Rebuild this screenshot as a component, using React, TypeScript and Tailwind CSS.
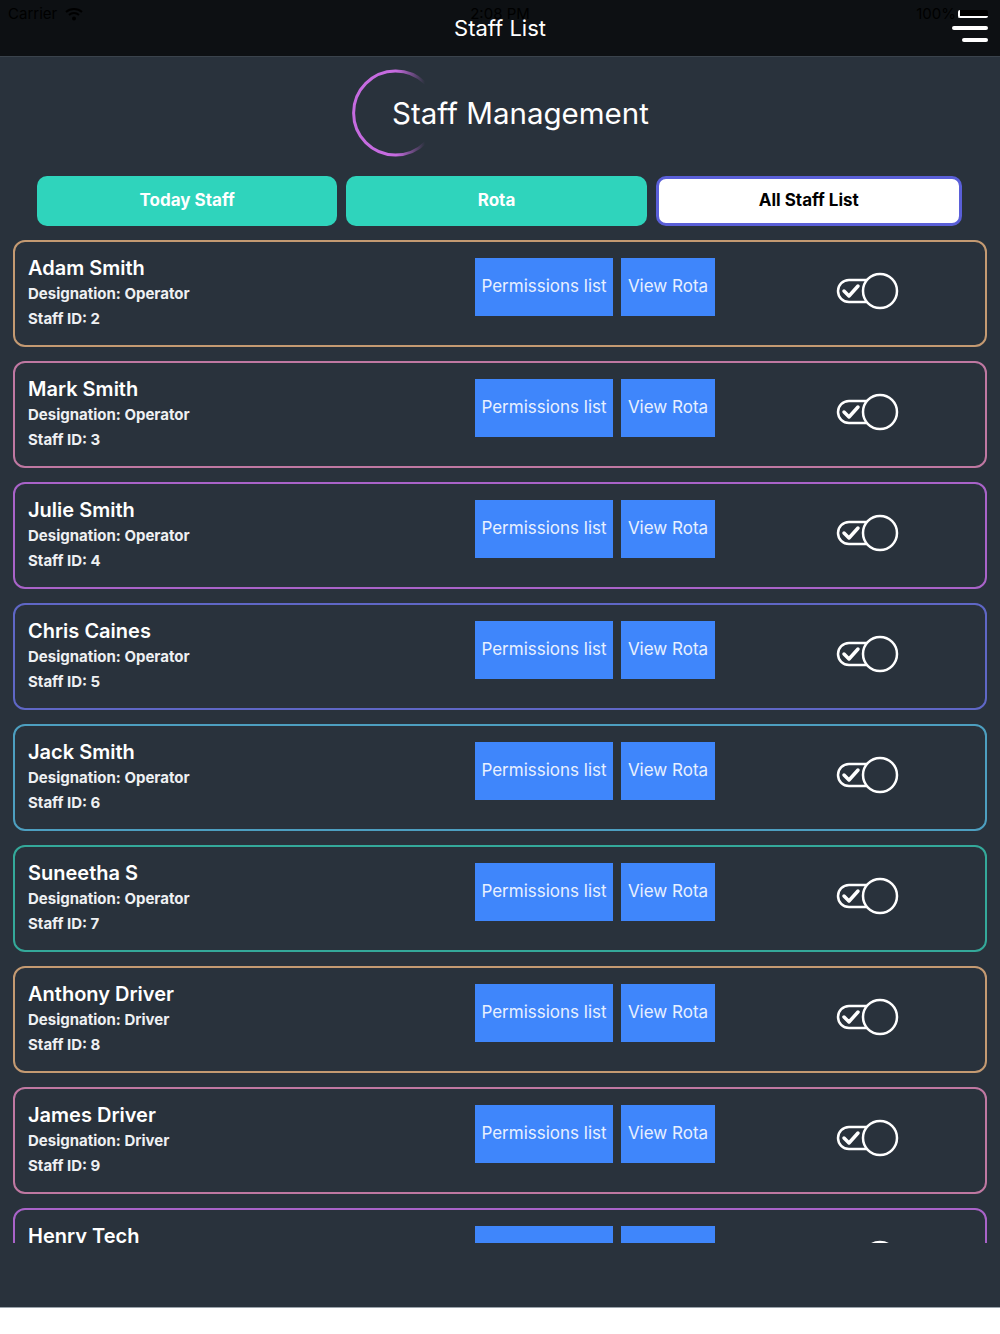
import { useState } from "react";

const staff = [
  { name: "Adam Smith", role: "Operator", id: 2 },
  { name: "Mark Smith", role: "Operator", id: 3 },
  { name: "Julie Smith", role: "Operator", id: 4 },
  { name: "Chris Caines", role: "Operator", id: 5 },
  { name: "Jack Smith", role: "Operator", id: 6 },
  { name: "Suneetha S", role: "Operator", id: 7 },
  { name: "Anthony Driver", role: "Driver", id: 8 },
  { name: "James Driver", role: "Driver", id: 9 },
  { name: "Henry Tech", role: "Technician", id: 10 },
];

const borders = [
  "border-[#c49a72]",
  "border-[#bf78a2]",
  "border-[#a963c9]",
  "border-[#5f67c6]",
  "border-[#4d9fc0]",
  "border-[#34a99a]",
];

function Toggle() {
  return (
    <svg width="66" height="42" viewBox="0 0 66 42" fill="none">
      <rect x="2" y="10" width="40" height="22" rx="11" stroke="white" strokeWidth="2.5" />
      <path d="M8 21l5 5 9-10" stroke="white" strokeWidth="3.5" strokeLinecap="round" strokeLinejoin="round" />
      <circle cx="44" cy="21" r="17" fill="#29323c" stroke="white" strokeWidth="2.5" />
    </svg>
  );
}

function StaffCard({ s, i }: { s: (typeof staff)[number]; i: number }) {
  return (
    <div className={`shrink-0 h-[107px] rounded-xl border-2 ${borders[i % 6]} flex items-start px-[13px]`}>
      <div className="w-[447px] pt-[13px]">
        <div className="text-[20px] leading-[26px] font-semibold text-white">{s.name}</div>
        <div className="mt-[1px] text-[15px] leading-[24px] font-bold text-[#eef0f2]">Designation: {s.role}</div>
        <div className="mt-[1px] text-[15px] leading-[24px] font-bold text-[#eef0f2]">Staff ID: {s.id}</div>
      </div>
      <div className="flex gap-2 pt-[16px]">
        <button className="h-[58px] w-[138px] bg-[#3f86fb] text-[17px] text-[#e8f0ff]">Permissions list</button>
        <button className="h-[58px] w-[94px] bg-[#3f86fb] text-[17px] text-[#e8f0ff]">View Rota</button>
      </div>
      <div className="ml-[121px] pt-[28px]">
        <Toggle />
      </div>
    </div>
  );
}

export default function App() {
  const [tab, setTab] = useState(2);
  const tabs = ["Today Staff", "Rota", "All Staff List"];
  return (
    <div className="w-[1000px] h-[1334px] bg-white flex flex-col" style={{ fontFamily: "Inter, 'Noto Sans', sans-serif" }}>
      {/* nav bar */}
      <div className="relative h-[57px] bg-[#0d1013] border-b border-[#3a434c] flex items-center justify-center">
        <div className="absolute left-[8px] top-[3px] flex items-center gap-2 text-[15px] text-black">
          <span>Carrier</span>
          <svg width="18" height="14" viewBox="0 0 18 14">
            <path d="M1 5a12 12 0 0 1 16 0M4 8a7.5 7.5 0 0 1 10 0" stroke="black" strokeWidth="2" fill="none" />
            <circle cx="9" cy="11.5" r="2" fill="black" />
          </svg>
        </div>
        <div className="absolute top-[3px] left-0 right-0 text-center text-[15px] text-black">2:08 PM</div>
        <div className="absolute right-[44px] top-[3px] text-[15px] text-black">100%</div>
        <span className="text-[22px] text-white pt-[1px]">Staff List</span>
        <div className="absolute right-[12px] top-[10px] flex flex-col items-end gap-[8px]">
          <div className="w-[30px] h-[8px] rounded-[2px] bg-black border-b-2 border-l-2 border-white" />
          <div className="w-[36px] h-[4px] rounded-full bg-white" />
          <div className="w-[26px] h-[4px] rounded-full bg-white" />
        </div>
      </div>

      <div className="h-[1250px] bg-[#29323c] flex flex-col">
        {/* heading */}
        <div className="h-[118px] pb-[6px] pl-[351px] flex items-center">
          <svg className="shrink-0" width="90" height="90" viewBox="0 0 90 90">
            <defs>
              <linearGradient id="arc" x1="0" y1="0" x2="1" y2="0">
                <stop offset="0" stopColor="#c66be0" />
                <stop offset="0.6" stopColor="#c66be0" />
                <stop offset="1" stopColor="#c66be0" stopOpacity="0" />
              </linearGradient>
            </defs>
            <path d="M74 15 A42 42 0 1 0 74 75" stroke="url(#arc)" strokeWidth="3" fill="none" strokeLinecap="round" />
          </svg>
          <span className="ml-[-49px] text-[29.5px] text-white">Staff Management</span>
        </div>

        {/* tabs */}
        <div className="flex gap-[9px] pl-[37px] pr-[38px] h-[50px] mt-[1px]">
          {tabs.map((t, i) =>
            i === tab ? (
              <button key={t} onClick={() => setTab(i)} className="flex-1 rounded-[10px] bg-white border-[3px] border-[#5a5fd8] text-[17px] font-bold text-black">
                {t}
              </button>
            ) : (
              <button key={t} onClick={() => setTab(i)} className="flex-1 rounded-[10px] bg-[#2fd4bc] text-[17px] font-bold text-white">
                {t}
              </button>
            )
          )}
        </div>

        {/* list */}
        <div className="mt-[14px] mx-[13px] h-[1003px] overflow-hidden flex flex-col gap-[14px]">
          {staff.map((s, i) => (
            <StaffCard key={s.id} s={s} i={i} />
          ))}
        </div>
      </div>
      <div className="h-[1px] bg-[#9aa3ab]" />
    </div>
  );
}
